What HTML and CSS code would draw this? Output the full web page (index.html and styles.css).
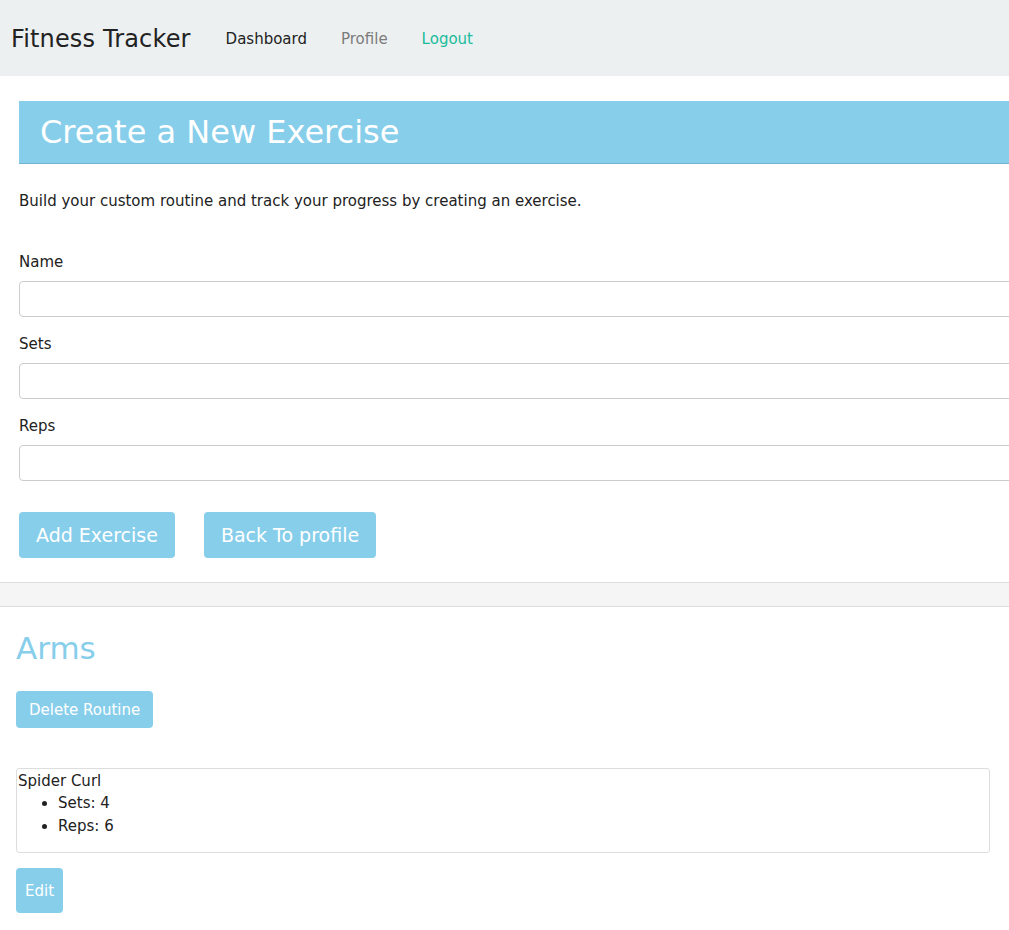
FILE: index.html
```html
<!DOCTYPE html>
<html>
<head>
<meta charset="utf-8">
<link rel="stylesheet" href="styles.css">
</head>
<body>
<nav class="navbar">
  <span class="brand">Fitness Tracker</span>
  <a class="nav-link nav-dark">Dashboard</a>
  <a class="nav-link nav-grey">Profile</a>
  <a class="nav-link nav-teal">Logout</a>
</nav>
<main class="create">
  <h1 class="banner">Create a New Exercise</h1>
  <p class="intro">Build your custom routine and track your progress by creating an exercise.</p>
  <form class="form">
    <label class="field"><span class="label">Name</span><input class="input" type="text"></label>
    <label class="field"><span class="label">Sets</span><input class="input" type="text"></label>
    <label class="field field-last"><span class="label">Reps</span><input class="input" type="text"></label>
    <div class="actions">
      <button type="button" class="btn btn-lg">Add Exercise</button>
      <button type="button" class="btn btn-lg">Back To profile</button>
    </div>
  </form>
</main>
<div class="band"></div>
<section class="routine">
  <h2 class="routine-title">Arms</h2>
  <button type="button" class="btn btn-md">Delete Routine</button>
  <div class="exercise">
    <div class="ex-name">Spider Curl</div>
    <ul class="ex-list">
      <li>Sets: 4</li>
      <li>Reps: 6</li>
    </ul>
  </div>
  <button type="button" class="btn btn-edit">Edit</button>
</section>
</body>
</html>
```
FILE: styles.css
```css
html, body {
  margin: 0;
  padding: 0;
  overflow: hidden;
}
body {
  font-family: "DejaVu Sans", Verdana, sans-serif;
  color: #222;
  background: #fff;
  width: 1009px;
}
.navbar {
  height: 76px;
  box-sizing: border-box;
  padding: 2px 0 0 11px;
  background: #ecf0f1;
  display: flex;
  align-items: center;
}
.brand {
  font-size: 24px;
  letter-spacing: 0.15px;
  color: #222;
  margin-right: 35px;
}
.nav-link {
  font-size: 15px;
  margin-right: 34px;
}
.nav-dark { color: #222; }
.nav-grey { color: #7b7b7b; }
.nav-teal { color: #1abc9c; }
.create {
  padding: 25px 0 24px 19px;
}
.banner {
  margin: 0;
  width: 1040px;
  height: 63px;
  box-sizing: border-box;
  background: #87ceeb;
  border-bottom: 1px solid #74b3cc;
  color: #fff;
  font-weight: normal;
  font-size: 32px;
  line-height: 62px;
  padding-left: 21px;
}
.intro {
  margin: 27px 0 0 0;
  font-size: 15px;
  line-height: 20px;
}
.form {
  margin-top: 41px;
  display: flex;
  flex-direction: column;
}
.field {
  display: flex;
  flex-direction: column;
}
.label {
  font-size: 15px;
  line-height: 20px;
  margin-bottom: 9px;
}
.input {
  width: 1040px;
  height: 36px;
  box-sizing: border-box;
  border: 1px solid #ccc;
  border-radius: 4px;
  margin-bottom: 17px;
}
.field-last .input { margin-bottom: 31px; }
.actions {
  display: flex;
  gap: 29px;
}
.btn {
  background: #87ceeb;
  color: #fff;
  border: none;
  border-radius: 4px;
  font-family: "DejaVu Sans", Verdana, sans-serif;
  cursor: pointer;
  padding: 0;
}
.btn-lg {
  height: 46px;
  font-size: 19px;
  padding: 0 17px;
}
.band {
  height: 23px;
  background: #f5f5f5;
  border-top: 1px solid #ddd;
  border-bottom: 1px solid #ddd;
}
.routine {
  padding: 23px 0 0 16px;
  display: flex;
  flex-direction: column;
  align-items: flex-start;
}
.routine-title {
  margin: 0;
  font-weight: normal;
  font-size: 31px;
  line-height: 36px;
  color: #87ceeb;
}
.btn-md {
  margin-top: 25px;
  height: 37px;
  font-size: 15px;
  padding: 0 13px;
}
.exercise {
  margin-top: 40px;
  width: 974px;
  height: 85px;
  box-sizing: border-box;
  border: 1px solid #ddd;
  border-radius: 3px;
  padding: 2px 1px;
  font-size: 15px;
  line-height: 21px;
}
.ex-list {
  margin: 0;
  padding-left: 40px;
}
.ex-list li {
  line-height: 23px;
}
.btn-edit {
  margin-top: 15px;
  height: 45px;
  width: 47px;
  font-size: 15px;
}
```
